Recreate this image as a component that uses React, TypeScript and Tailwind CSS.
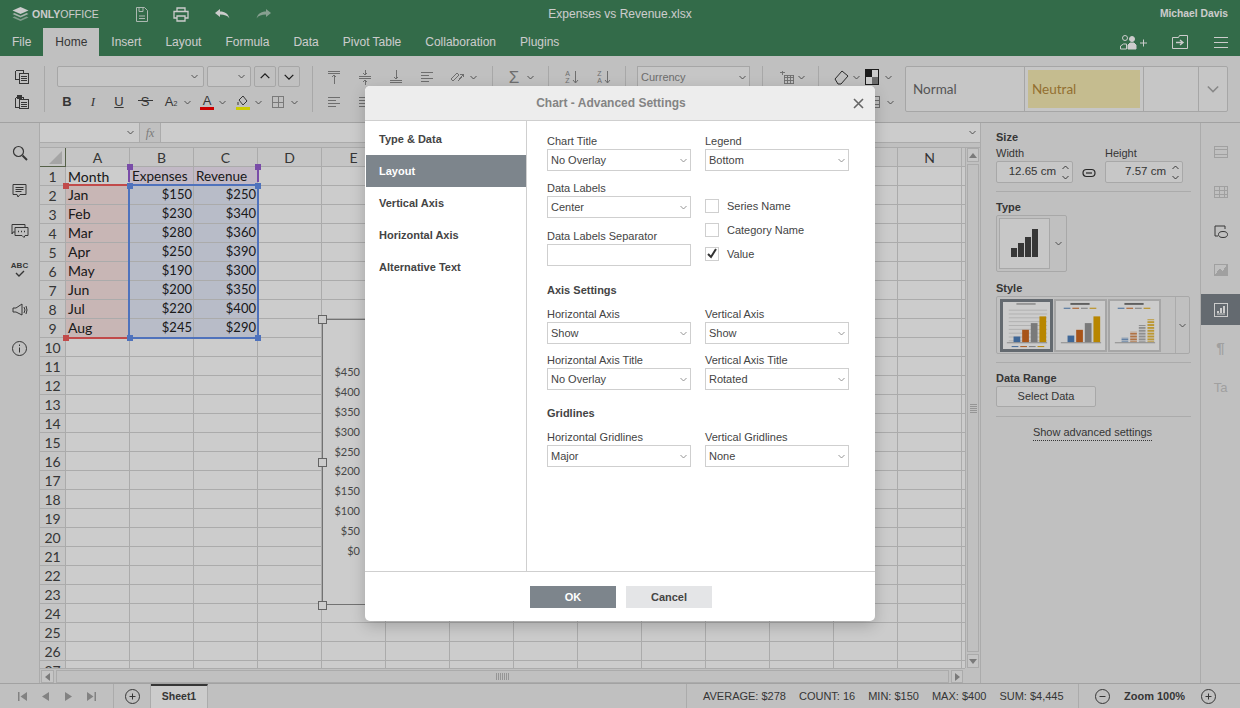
import type { ReactNode } from "react";

const LINE = "border-[#d6d6d6]";
const colNames = "ABCDEFGHIJKLMN".split("");
const months = ["Jan", "Feb", "Mar", "Apr", "May", "Jun", "Jul", "Aug"];
const expenses = ["$150", "$230", "$280", "$250", "$190", "$200", "$220", "$245"];
const revenue = ["$250", "$340", "$360", "$390", "$300", "$350", "$400", "$290"];
const axisLabels = ["$450", "$400", "$350", "$300", "$250", "$200", "$150", "$100", "$50", "$0"];
const tabs = ["Insert", "Layout", "Formula", "Data", "Pivot Table", "Collaboration", "Plugins"];

const Svg = ({ s = 16, c = "#444", children }: { s?: number; c?: string; children: ReactNode }) => (
  <svg width={s} height={s} viewBox="0 0 16 16" fill="none" stroke={c} strokeWidth="1" shapeRendering="crispEdges">
    {children}
  </svg>
);

const Chev = ({ c = "#555", s = 7 }: { c?: string; s?: number }) => (
  <svg width={s} height={s} viewBox="0 0 7 7" fill="none" stroke={c} strokeWidth="0.9" className="shrink-0">
    <path d="M0.5 2 L3.5 5 L6.5 2" />
  </svg>
);

const Sep = () => <div className="h-[46px] w-px bg-[#d2d2d2]" />;

const Tool = ({ w, children }: { w: string; children: ReactNode }) => (
  <div className={`flex h-[22px] shrink-0 items-center justify-center ${w}`}>{children}</div>
);

const CopyIcon = () => (
  <Svg>
    <path d="M1.5 1.5h8v3M1.5 1.5v9h3" />
    <path d="M5.5 4.5h9v10h-9z" />
    <path d="M7 7.5h6M7 9.5h6M7 11.5h6" />
  </Svg>
);

const PasteIcon = () => (
  <Svg>
    <path d="M1.5 3.5h8v2M1.5 3.5v10h3" />
    <path d="M3.5 1.5h4v3h-4z" fill="#444" />
    <path d="M5.5 5.5h9v9h-9z" />
    <path d="M7 8.5h6M7 10.5h6M7 12.5h6" />
  </Svg>
);

const AlignV = ({ kind }: { kind: "top" | "mid" | "bot" }) => (
  <Svg c="#8a8a8a">
    {kind === "top" && <path d="M2 2.5h12M2 4.5h12M8 6v9M6 8l2-2 2 2" />}
    {kind === "mid" && <path d="M2 7.5h12M2 9.5h12M8 1v5M6 4l2 2 2-2M8 11v5M6 13l2-2 2 2" />}
    {kind === "bot" && <path d="M2 11.5h12M2 13.5h12M8 1v9M6 8l2 2 2-2" />}
  </Svg>
);

const Lines = ({ c = "#8a8a8a" }: { c?: string }) => (
  <Svg c={c}>
    <path d="M2 3.5h12M2 6.5h8M2 9.5h12M2 12.5h8" />
  </Svg>
);

const Sort = ({ a, b }: { a: string; b: string }) => (
  <div className="flex items-center gap-[2px] text-[#8a8a8a]">
    <div className="flex flex-col text-[7px] leading-[7px]">
      <span>{a}</span>
      <span>{b}</span>
    </div>
    <svg width="7" height="14" viewBox="0 0 7 14" fill="none" stroke="#8a8a8a">
      <path d="M3.5 1v12M1 10l2.5 3 2.5-3" />
    </svg>
  </div>
);

const Toolbar = () => (
  <div className="flex h-[67px] shrink-0 items-start border-b border-[#cbcbcb] bg-[#f1f1f1] pt-[10px]">
    <div className="flex w-[44px] shrink-0 flex-col items-center gap-[3px]">
      <Tool w="w-[22px]"><CopyIcon /></Tool>
      <Tool w="w-[22px]"><PasteIcon /></Tool>
    </div>
    <Sep />
    <div className="ml-[12px] flex w-[243px] shrink-0 flex-col gap-[3px]">
      <div className="flex h-[22px]">
        <div className="flex h-[21px] w-[147px] items-center justify-end rounded-[2px] border border-[#d0d0d0] bg-[#f8f8f8] pr-[5px]"><Chev /></div>
        <div className="ml-[3px] flex h-[21px] w-[44px] items-center justify-end rounded-[2px] border border-[#d0d0d0] bg-[#f8f8f8] pr-[5px]"><Chev /></div>
        <div className="ml-[3px] flex h-[21px] w-[22px] rotate-180 items-center justify-center rounded-[2px] border border-[#d0d0d0]"><Chev c="#222" s={10} /></div>
        <div className="ml-[2px] flex h-[21px] w-[22px] items-center justify-center rounded-[2px] border border-[#d0d0d0]"><Chev c="#222" s={10} /></div>
      </div>
      <div className="-ml-[3px] flex h-[22px] items-center text-[13px] text-[#444]">
        <Tool w="w-[26px]"><b>B</b></Tool>
        <Tool w="w-[26px]"><i className="font-['Liberation_Serif',serif]">I</i></Tool>
        <Tool w="w-[26px]"><u>U</u></Tool>
        <Tool w="w-[26px]">
          <span className="relative">
            S
            <span className="absolute left-[-3px] top-[8px] h-px w-[15px] bg-[#444]" />
          </span>
        </Tool>
        <Tool w="w-[26px]"><span>A<span className="text-[7px]">2</span></span></Tool>
        <Tool w="w-[6px]"><Chev /></Tool>
        <Tool w="ml-[5px] w-[24px]">
          <span className="flex flex-col items-center leading-[13px]">A<span className="h-[3px] w-[14px] bg-[#ff0000]" /></span>
        </Tool>
        <Tool w="w-[6px]"><Chev /></Tool>
        <Tool w="ml-[6px] w-[24px]">
          <span className="flex flex-col items-center">
            <svg width="14" height="13" viewBox="0 0 14 13" fill="none" stroke="#444"><path d="M3 6l4-4 4 5-4 4zM2 8v3" /></svg>
            <span className="h-[3px] w-[14px] bg-[#ffff00]" />
          </span>
        </Tool>
        <Tool w="w-[6px]"><Chev /></Tool>
        <Tool w="ml-[5px] w-[24px]">
          <Svg c="#999"><path d="M2.500 2.500h11v11h-11zM8 2.500v11M2.500 8h11" /></Svg>
        </Tool>
        <Tool w="ml-px w-[6px]"><Chev /></Tool>
      </div>
    </div>
    <div className="ml-[12px]"><Sep /></div>
    <div className="flex w-[179px] shrink-0 flex-col gap-[3px] pl-[5px]">
      <div className="flex items-center">
        <Tool w="w-[31px]"><AlignV kind="top" /></Tool>
        <Tool w="w-[31px]"><AlignV kind="mid" /></Tool>
        <Tool w="w-[31px]"><AlignV kind="bot" /></Tool>
        <Tool w="w-[32px]"><Lines /></Tool>
        <Tool w="w-[28px]">
          <Svg c="#8a8a8a"><path d="M2 10l6-6 2 2-6 6zM9 12l5-6M11 5h3v3" /></Svg>
        </Tool>
        <Tool w="w-[4px]"><Chev /></Tool>
      </div>
      <div className="flex items-center">
        <Tool w="w-[31px]"><Lines /></Tool>
        <Tool w="w-[31px]"><Lines /></Tool>
      </div>
    </div>
    <Sep />
    <div className="flex w-[55px] shrink-0 items-center pl-[11px]">
      <Tool w="w-[20px]"><span className="text-[17px] leading-none text-[#8a8a8a]">Σ</span></Tool>
      <Tool w="w-[12px]"><Chev /></Tool>
    </div>
    <Sep />
    <div className="flex w-[76px] shrink-0 items-center pl-[7px]">
      <Tool w="w-[32px]"><Sort a="A" b="Z" /></Tool>
      <Tool w="w-[32px]"><Sort a="Z" b="A" /></Tool>
    </div>
    <Sep />
    <div className="ml-[11px] flex h-[21px] w-[113px] shrink-0 items-center justify-between border border-[#d0d0d0] bg-[#f8f8f8] pl-[3px] pr-[3px] pt-px text-[11px] text-[#888]">
      Currency <Chev />
    </div>
    <div className="ml-[12px]"><Sep /></div>
    <div className="flex w-[55px] shrink-0 items-center pl-[15px]">
      <Tool w="w-[18px]">
        <Svg s={15} c="#8a8a8a"><path d="M4.500 5.500h10v9h-10zM4.500 8.500h10M4.500 11.500h10M8 5.500v9M11 5.500v9M0 3h5M2.500 1v4" /></Svg>
      </Tool>
      <Tool w="w-[11px]"><Chev /></Tool>
    </div>
    <Sep />
    <div className="flex w-[86px] shrink-0 flex-col gap-[3px] pl-[12px]">
      <div className="flex items-center">
        <Tool w="w-[20px]">
          <svg width="17" height="17" viewBox="0 0 17 17" fill="none" stroke="#333"><path d="M2 10l7-8 6 5-7 8H5z" /></svg>
        </Tool>
        <Tool w="w-[11px]"><Chev /></Tool>
        <Tool w="ml-px w-[17px]">
          <span className="grid h-[16px] w-[14px] grid-cols-2 grid-rows-2 border border-[#222]">
            <span className="bg-[#222]" /><span className="bg-white" /><span className="bg-white" /><span className="bg-[#888]" />
          </span>
        </Tool>
        <Tool w="ml-px w-[14px]"><Chev /></Tool>
      </div>
      <div className="flex items-center pl-[35px]">
        <Tool w="w-[17px]"><Svg c="#8a8a8a"><path d="M3.500 2.500h9v11h-9zM3.500 6h9M3.500 10h9" /></Svg></Tool>
        <Tool w="w-[14px]"><Chev /></Tool>
      </div>
    </div>
    <div className="flex h-[46px] w-[323px] shrink-0 rounded-[2px] border border-[#d0d0d0] bg-[#f8f8f8]">
      <div className="flex w-[119px] items-center border-r border-[#d0d0d0] pl-[7px] font-['Lato',sans-serif] text-[13.5px] text-[#6b6b6b]">Normal</div>
      <div className="flex w-[119px] items-center border-r border-[#d0d0d0] px-[3px]">
        <div className="flex h-[38px] w-[112px] items-center bg-[#f7ebb3] pl-[4px] font-['Lato',sans-serif] text-[13.5px] text-[#b88c3c]">Neutral</div>
      </div>
      <div className="w-[55px] border-r border-[#d0d0d0]" />
      <div className="flex flex-1 items-center justify-center"><Chev c="#aaa" s={12} /></div>
    </div>
  </div>
);

const Select = ({ value }: { value: string }) => (
  <div className="flex h-[22px] w-[144px] items-center justify-between border border-[#cfcfcf] bg-white pl-[3px] pr-[3px] text-[11px] text-[#444]">
    {value}
    <Chev c="#888" />
  </div>
);

const Field = ({ label, value }: { label: string; value: string }) => (
  <div className="flex w-[144px] flex-col">
    <div className="h-[15px] text-[11px] leading-[15px] text-[#444]">{label}</div>
    <Select value={value} />
  </div>
);

const Check = ({ label, on }: { label: string; on?: boolean }) => (
  <div className="flex h-[14px] items-center text-[11px] text-[#444]">
    <div className="flex h-[14px] w-[14px] items-center justify-center border border-[#cfcfcf] bg-white">
      {on && (
        <svg width="12" height="12" viewBox="0 0 12 12" fill="none" stroke="#333" strokeWidth="2">
          <path d="M2 6l3 3 5-8" />
        </svg>
      )}
    </div>
    <span className="ml-[8px]">{label}</span>
  </div>
);

const Dialog = () => (
  <div className="absolute left-[365px] top-[86px] flex h-[535px] w-[510px] flex-col overflow-hidden rounded-[5px] bg-white shadow-[0_5px_15px_rgba(0,0,0,0.2)]">
    <div className="relative flex h-[35px] shrink-0 items-center justify-center border-b border-[#cfcfcf] bg-[#ededed] pr-[18px] text-[12px] font-bold text-[#848484]">
      Chart - Advanced Settings
      <svg className="absolute left-[488px] top-[12px]" width="11" height="11" viewBox="0 0 11 11" fill="none" stroke="#666" strokeWidth="1.6">
        <path d="M1 1l9 9M10 1l-9 9" />
      </svg>
    </div>
    <div className="flex h-[450px] shrink-0">
      <div className="flex w-[162px] shrink-0 flex-col border-r border-[#cfcfcf] pl-px pt-[2px] text-[11px] font-bold text-[#444]">
        <div className="flex h-[32px] items-center pl-[13px]">Type &amp; Data</div>
        <div className="flex h-[32px] items-center bg-[#7d858c] pl-[13px] text-white">Layout</div>
        <div className="flex h-[32px] items-center pl-[13px]">Vertical Axis</div>
        <div className="flex h-[32px] items-center pl-[13px]">Horizontal Axis</div>
        <div className="flex h-[32px] items-center pl-[13px]">Alternative Text</div>
      </div>
      <div className="flex flex-1 flex-col pl-[20px] pt-[13px]">
        <div className="flex gap-[14px]">
          <Field label="Chart Title" value="No Overlay" />
          <Field label="Legend" value="Bottom" />
        </div>
        <div className="mt-[10px] flex gap-[14px]">
          <div className="flex w-[144px] flex-col">
            <Field label="Data Labels" value="Center" />
            <div className="mt-[11px] h-[15px] text-[11px] leading-[15px] text-[#444]">Data Labels Separator</div>
            <div className="h-[22px] border border-[#cfcfcf] bg-white" />
          </div>
          <div className="flex flex-col gap-[10px] pt-[18px]">
            <Check label="Series Name" />
            <Check label="Category Name" />
            <Check label="Value" on />
          </div>
        </div>
        <div className="mt-[17px] h-[15px] text-[11px] font-bold leading-[15px] text-[#444]">Axis Settings</div>
        <div className="mt-[9px] flex gap-[14px]">
          <Field label="Horizontal Axis" value="Show" />
          <Field label="Vertical Axis" value="Show" />
        </div>
        <div className="mt-[9px] flex gap-[14px]">
          <Field label="Horizontal Axis Title" value="No Overlay" />
          <Field label="Vertical Axis Title" value="Rotated" />
        </div>
        <div className="mt-[16px] h-[15px] text-[11px] font-bold leading-[15px] text-[#444]">Gridlines</div>
        <div className="mt-[9px] flex gap-[14px]">
          <Field label="Horizontal Gridlines" value="Major" />
          <Field label="Vertical Gridlines" value="None" />
        </div>
      </div>
    </div>
    <div className="flex flex-1 gap-[10px] border-t border-[#cfcfcf] pl-[165px] pt-[14px] text-[11px] font-bold">
      <div className="flex h-[22px] w-[86px] items-center justify-center bg-[#7d858c] text-white">OK</div>
      <div className="flex h-[22px] w-[86px] items-center justify-center bg-[#e4e5e7] text-[#444]">Cancel</div>
    </div>
  </div>
);

const Handle = ({ cls }: { cls: string }) => <div className={`absolute h-[6px] w-[6px] ${cls}`} />;

const ChartHandle = ({ cls }: { cls: string }) => (
  <div className={`absolute h-[9px] w-[9px] border border-[#7c7c7c] bg-white ${cls}`} />
);

const Grid = () => (
  <div className="relative h-[520px] w-[925px] overflow-hidden bg-white font-['Lato',sans-serif] text-[14px] text-[#222]">
    <div className="flex h-[19px]">
      <div className="relative h-[19px] w-[26px] shrink-0 border-b border-r border-[#6b7a5a] bg-[#f7f7f7]">
        <div className="absolute bottom-[2px] right-[3px] h-0 w-0 border-b-[13px] border-l-[13px] border-b-[#cfcfcf] border-l-transparent" />
      </div>
      {colNames.map((c) => (
        <div key={c} className={`flex h-[19px] w-[64px] shrink-0 items-center justify-center border-b border-r bg-[#f7f7f7] text-[#444] ${LINE}`}>{c}</div>
      ))}
      <div className={`flex-1 border-b bg-[#f7f7f7] ${LINE}`} />
    </div>
    {Array.from({ length: 27 }, (_, r) => {
      const i = r - 1;
      return (
        <div key={r} className="flex h-[19px]">
          <div className={`flex h-[19px] w-[26px] shrink-0 items-center justify-center border-b border-r bg-[#f7f7f7] text-[#444] ${LINE}`}>{r + 1}</div>
          {colNames.map((c) => {
            let text = "";
            let tone = "";
            let align = "pb-[2px] pl-[2px]";
            if (r === 0 && c === "A") { text = "Month"; align = "pl-[2px]"; }
            if (r === 0 && c === "B") { text = "Expenses"; tone = "bg-[#f3e8f8] text-[13.5px]"; align = "pl-[2px]"; }
            if (r === 0 && c === "C") { text = "Revenue"; tone = "bg-[#f3e8f8] text-[13.5px]"; align = "pl-[2px]"; }
            if (r >= 1 && r <= 8) {
              if (c === "A") { text = months[i]; tone = "bg-[#fbe4e3]"; }
              if (c === "B") { text = expenses[i]; tone = "bg-[#e6ebfb] text-[13px]"; align = "justify-end pr-[1px]"; }
              if (c === "C") { text = revenue[i]; tone = "bg-[#e6ebfb] text-[13px]"; align = "justify-end pr-[1px]"; }
            }
            return (
              <div key={c} className={`flex h-[19px] w-[64px] shrink-0 items-center overflow-hidden whitespace-nowrap border-b border-r ${LINE} ${tone} ${align}`}>{text}</div>
            );
          })}
          <div className={`flex-1 border-b ${LINE}`} />
        </div>
      );
    })}

    <div className="absolute left-[26px] top-[36px] h-[2px] w-[63px] bg-[#f25d5d]" />
    <div className="absolute left-[26px] top-[189px] h-[2px] w-[63px] bg-[#f25d5d]" />
    <div className="absolute left-[88px] top-[36px] h-[155px] w-[131px] border-2 border-[#638fec]" />
    <div className="absolute left-[88px] top-[22px] h-[12px] w-[2px] bg-[#9860d2]" />
    <div className="absolute left-[217px] top-[22px] h-[12px] w-[2px] bg-[#9860d2]" />
    <Handle cls="left-[23px] top-[35px] bg-[#f25d5d]" />
    <Handle cls="left-[23px] top-[187px] bg-[#f25d5d]" />
    <Handle cls="left-[87px] top-[16px] bg-[#9860d2]" />
    <Handle cls="left-[215px] top-[16px] bg-[#9860d2]" />
    <Handle cls="left-[87px] top-[35px] bg-[#638fec]" />
    <Handle cls="left-[215px] top-[35px] bg-[#638fec]" />
    <Handle cls="left-[87px] top-[187px] bg-[#638fec]" />
    <Handle cls="left-[215px] top-[187px] bg-[#638fec]" />

    <div className="absolute left-[282px] top-[171px] h-[286px] w-[478px] border border-[#8f8f8f] bg-white pr-[439px] pt-[42px] text-right text-[11px] text-[#595959]">
      {axisLabels.map((l) => (
        <div key={l} className="h-[19.9px] leading-[19.9px]">{l}</div>
      ))}
    </div>
    <ChartHandle cls="left-[278px] top-[167px]" />
    <ChartHandle cls="left-[278px] top-[310px]" />
    <ChartHandle cls="left-[278px] top-[453px]" />
  </div>
);

const ScrollV = () => (
  <div className={`flex h-[520px] w-[15px] shrink-0 flex-col gap-[2px] border-l bg-[#f1f1f1] pl-px pr-px ${LINE}`}>
    <div className={`flex h-[14px] shrink-0 items-center justify-center border bg-[#f7f7f7] ${LINE}`}>
      <div className="h-0 w-0 border-x-[4px] border-b-[5px] border-x-transparent border-b-[#999]" />
    </div>
    <div className={`flex flex-1 items-center justify-center border bg-[#f1f1f1] ${LINE}`}>
      <div className="h-[10px] w-[7px] bg-[repeating-linear-gradient(0deg,#bbb_0,#bbb_1px,transparent_1px,transparent_2px)]" />
    </div>
    <div className={`flex h-[14px] shrink-0 items-center justify-center border bg-[#f7f7f7] ${LINE}`}>
      <div className="h-0 w-0 border-x-[4px] border-t-[5px] border-x-transparent border-t-[#999]" />
    </div>
  </div>
);

const ScrollH = () => (
  <div className={`flex h-[15px] w-[925px] shrink-0 gap-[2px] border-t pt-px ${LINE}`}>
    <div className={`ml-px flex h-[13px] w-[13px] shrink-0 items-center justify-center border bg-[#f7f7f7] ${LINE}`}>
      <div className="h-0 w-0 border-y-[4px] border-r-[5px] border-y-transparent border-r-[#999]" />
    </div>
    <div className={`flex h-[13px] flex-1 items-center justify-center border ${LINE}`}>
      <div className="h-[7px] w-[14px] bg-[repeating-linear-gradient(90deg,#bbb_0,#bbb_1px,transparent_1px,transparent_2px)]" />
    </div>
    <div className={`mr-[2px] flex h-[13px] w-[12px] shrink-0 items-center justify-center border bg-[#f7f7f7] ${LINE}`}>
      <div className="h-0 w-0 border-y-[4px] border-l-[5px] border-y-transparent border-l-[#999]" />
    </div>
  </div>
);

const barColors = ["#4f81bd", "#d2691e", "#999", "#e6a800"];

const Thumb = ({ bars, selected, striped, legendTop }: { bars: number[]; selected?: boolean; striped?: boolean; legendTop?: boolean }) => (
  <div className={`flex h-[53px] w-[53px] shrink-0 items-center justify-center bg-white ${selected ? "border-[3px] border-[#7d858c]" : "border-[2px] border-[#d0d0d0]"}`}>
    <svg width="47" height="47" viewBox="0 0 49 49" className="shrink-0">
      <rect x="14" y="1" width="20" height="2" fill={selected ? "#bbb" : "#777"} />
      {legendTop && barColors.map((f, i) => <rect key={f} x={7 + i * 9} y="6" width="7" height="1" fill={f} />)}
      {!legendTop && [8, 12, 16, 20, 24, 28, 32, 36, 40].map((y) => <rect key={y} x="6" y={y} width="40" height="1" fill="#ddd" />)}
      {bars.map((h, i) => (
        <rect key={i} x={11 + i * 9} y={42 - h} width="7" height={h} fill={barColors[i]} opacity={striped ? 0.75 : 1} />
      ))}
      {striped && [16, 19, 22, 25, 28, 31, 34, 37, 40].map((y) => <rect key={y} x="10" y={y} width="36" height="1" fill="#fff" />)}
      <rect x="4" y="42" width="42" height="1" fill="#aaa" />
      {!legendTop && barColors.map((f, i) => <rect key={f} x={9 + i * 9} y="46" width="7" height="1" fill={f} />)}
    </svg>
  </div>
);

const RightPanel = () => (
  <div className={`flex w-[221px] shrink-0 flex-col border-l border-r bg-[#f1f1f1] pl-[15px] pr-[9px] text-[11px] text-[#444] ${LINE}`}>
    <div className="mt-[7px] h-[14px] font-bold leading-[14px]">Size</div>
    <div className="mt-[2px] flex">
      <div>
        <div className="h-[15px] leading-[15px]">Width</div>
        <div className="flex h-[22px] w-[77px] items-center justify-end rounded-[2px] border border-[#d3d3d3] bg-[#f9f9f9] pr-[3px] text-[12px]">
          <span className="text-[11.5px]">12.65 cm</span>
          <div className="ml-[6px] flex flex-col gap-[3px]"><span className="rotate-180"><Chev c="#333" /></span><Chev c="#333" /></div>
        </div>
      </div>
      <div className="flex w-[32px] items-end justify-center pb-[5px]">
        <svg width="14" height="10" viewBox="0 0 14 10" fill="none" stroke="#333" strokeWidth="1.2"><rect x="1" y="1.500" width="12" height="7" rx="3.500" /><path d="M4 5h6" /></svg>
      </div>
      <div>
        <div className="h-[15px] leading-[15px]">Height</div>
        <div className="flex h-[22px] w-[78px] items-center justify-end rounded-[2px] border border-[#d3d3d3] bg-[#f9f9f9] pr-[3px]">
          <span className="text-[11.5px]">7.57 cm</span>
          <div className="ml-[6px] flex flex-col gap-[3px]"><span className="rotate-180"><Chev c="#333" /></span><Chev c="#333" /></div>
        </div>
      </div>
    </div>
    <div className={`mt-[8px] border-t ${LINE}`} />
    <div className="mt-[8px] h-[14px] font-bold leading-[14px]">Type</div>
    <div className="mt-[1px] flex h-[57px] w-[71px] items-center rounded-[2px] border border-[#d3d3d3] pl-[2px]">
      <div className="flex h-[51px] w-[51px] items-end justify-center gap-[1px] border border-[#d3d3d3] bg-[#f9f9f9] pb-[11px]">
        <span className="h-[9px] w-[6px] bg-[#444]" />
        <span className="h-[14px] w-[6px] bg-[#444]" />
        <span className="h-[20px] w-[6px] bg-[#444]" />
        <span className="h-[28px] w-[6px] bg-[#444]" />
      </div>
      <div className="ml-[5px]"><Chev /></div>
    </div>
    <div className="mt-[9px] h-[14px] font-bold leading-[14px]">Style</div>
    <div className="mt-[1px] flex h-[58px] w-[194px] items-center gap-px rounded-[2px] border border-[#d3d3d3] pl-[3px]">
      <Thumb bars={[6, 13, 20, 27]} selected />
      <Thumb bars={[7, 13, 20, 27]} legendTop />
      <Thumb bars={[5, 11, 18, 24]} legendTop striped />
      <div className={`ml-[13px] flex h-[56px] flex-1 items-center justify-center border-l ${LINE}`}><Chev /></div>
    </div>
    <div className={`mt-[8px] border-t ${LINE}`} />
    <div className="mt-[8px] h-[14px] font-bold leading-[14px]">Data Range</div>
    <div className="mt-[1px] flex h-[21px] w-[100px] items-center justify-center rounded-[2px] border border-[#d3d3d3] bg-[#f9f9f9]">Select Data</div>
    <div className={`mt-[9px] border-t ${LINE}`} />
    <div className="mt-[8px] flex justify-center pr-[2px]">
      <span className="border-b border-dotted border-[#444] pb-[1px] leading-[14px]">Show advanced settings</span>
    </div>
  </div>
);

const RightTabs = () => (
  <div className="flex w-[39px] shrink-0 flex-col items-center bg-[#f1f1f1] pt-[21px]">
    <div className="flex h-[16px] items-center"><Svg c="#c8c8c8"><path d="M1.500 2.500h13v11h-13zM1.500 5.500h13M1.500 10.500h13" /></Svg></div>
    <div className="mt-[24px] flex h-[16px] items-center"><Svg c="#c8c8c8"><path d="M1.500 2.500h13v11h-13zM1.500 6h13M1.500 10h13M6 2.500v11M11 2.500v11" /></Svg></div>
    <div className="mt-[24px] flex h-[16px] items-center">
      <svg width="16" height="16" viewBox="0 0 16 16" fill="none" stroke="#444"><path d="M5 12H2V2h10v3" /><ellipse cx="10" cy="10.500" rx="4.500" ry="3" /></svg>
    </div>
    <div className="mt-[22px] flex h-[16px] items-center"><Svg c="#c8c8c8"><path d="M1.500 2.500h13v11h-13z" /><path d="M3 12l4-5 3 3 3-5v7z" fill="#c8c8c8" /></Svg></div>
    <div className="mt-[16px] flex h-[31px] w-[39px] items-center justify-center bg-[#7d858c]">
      <svg width="14" height="14" viewBox="0 0 14 14" fill="none" stroke="#fff"><rect x="0.500" y="0.500" width="13" height="13" /><path d="M3 11h8" /><path d="M4 10V8M7 10V5M10 10V3" strokeWidth="2" /></svg>
    </div>
    <div className="mt-[15px] flex h-[16px] items-center text-[15px] font-bold text-[#c8c8c8]">¶</div>
    <div className="mt-[24px] flex h-[16px] items-center text-[13px] text-[#c8c8c8]">Ta</div>
  </div>
);

const LeftBar = () => (
  <div className={`flex w-[40px] shrink-0 flex-col items-center border-r bg-[#f1f1f1] pt-[22px] ${LINE}`}>
    <svg width="16" height="16" viewBox="0 0 16 16" fill="none" stroke="#444" strokeWidth="1.2"><circle cx="6.500" cy="6.500" r="5" /><path d="M10.500 10.500l4.500 4.500" strokeWidth="2" /></svg>
    <svg className="mt-[22px]" width="15" height="16" viewBox="0 0 15 16" fill="none" stroke="#444"><path d="M1 1.500h13v10H8l-2 2.500-1-2.500H1zM3.500 4.500h8M3.500 6.500h8M3.500 8.500h6" /></svg>
    <svg className="mt-[24px]" width="19" height="16" viewBox="0 0 19 16" fill="none" stroke="#444"><path d="M5 9H3l-1 2V1.500h13V4" /><path d="M5 4.500h13v8h-3l-1 2-2-2H5z" /><path d="M8 8.500h1M11 8.500h1M14 8.500h1" strokeWidth="1.400" /></svg>
    <div className="mt-[22px] flex h-[18px] flex-col items-center text-[8px] font-bold leading-[9px] text-[#444]">
      ABC
      <svg width="10" height="7" viewBox="0 0 10 7" fill="none" stroke="#444" strokeWidth="1.400"><path d="M1 3l3 3 5-5" /></svg>
    </div>
    <svg className="mt-[24px]" width="16" height="14" viewBox="0 0 16 14" fill="none" stroke="#444"><path d="M1 5h3l6-4v11L4 9H1zM12 4q2 3 0 6M14 3q2 4 0 8" /></svg>
    <svg className="mt-[24px]" width="15" height="15" viewBox="0 0 15 15" fill="none" stroke="#444"><circle cx="7.500" cy="7.500" r="7" /><path d="M7.500 6.500v5M7.500 3.500v1.500" /></svg>
  </div>
);

const StatusBar = () => (
  <div className="flex h-[25px] shrink-0 items-center border-t border-[#cbcbcb] bg-[#f1f1f1] text-[11px] text-[#444]">
    <div className={`flex h-full w-[114px] shrink-0 items-center gap-[14px] border-r pl-[18px] ${LINE}`}>
      <svg width="9" height="9" viewBox="0 0 9 9" fill="#a3a3a3"><path d="M0 0h1.500v9H0zM9 0v9L2.500 4.500z" /></svg>
      <svg width="9" height="9" viewBox="0 0 9 9" fill="#a3a3a3"><path d="M8 0v9L1 4.500z" /></svg>
      <svg width="9" height="9" viewBox="0 0 9 9" fill="#a3a3a3"><path d="M1 0v9l7-4.500z" /></svg>
      <svg width="9" height="9" viewBox="0 0 9 9" fill="#a3a3a3"><path d="M7.500 0H9v9H7.500zM0 0v9l6.500-4.500z" /></svg>
    </div>
    <div className={`flex h-full w-[37px] shrink-0 items-center justify-center border-r ${LINE}`}>
      <svg width="15" height="15" viewBox="0 0 15 15" fill="none" stroke="#444"><circle cx="7.500" cy="7.500" r="7" /><path d="M7.500 4.500v6M4.500 7.500h6" /></svg>
    </div>
    <div className={`flex h-full w-[57px] shrink-0 items-center justify-center border-r border-t-2 border-t-[#444] bg-white text-[10.5px] font-bold ${LINE}`}>Sheet1</div>
    <div className={`flex h-full w-[479px] shrink-0 border-r ${LINE}`} />
    <div className={`flex h-full w-[392px] shrink-0 items-center gap-[13px] border-r pl-[16px] ${LINE}`}>
      <span>AVERAGE: $278</span>
      <span>COUNT: 16</span>
      <span>MIN: $150</span>
      <span>MAX: $400</span>
      <span>SUM: $4,445</span>
    </div>
    <div className="flex flex-1 items-center pl-[16px]">
      <svg width="15" height="15" viewBox="0 0 15 15" fill="none" stroke="#444"><circle cx="7.500" cy="7.500" r="7" /><path d="M4.500 7.500h6" /></svg>
      <span className="ml-[14px] w-[62px] whitespace-nowrap font-bold">Zoom 100%</span>
      <svg className="ml-[15px]" width="15" height="15" viewBox="0 0 15 15" fill="none" stroke="#444"><circle cx="7.500" cy="7.500" r="7" /><path d="M7.500 4.500v6M4.500 7.500h6" /></svg>
    </div>
  </div>
);

const TitleBar = () => (
  <div className="relative flex h-[28px] shrink-0 items-center bg-[#40865c] pl-[12px] text-white">
    <svg width="17" height="15" viewBox="0 0 17 15" fill="#fff">
      <path d="M8.500 0l8 3.500-8 3.500-8-3.500z" />
      <path d="M2.500 6l6 2.700 6-2.700 2 1-8 3.500-8-3.500z" opacity="0.75" />
      <path d="M2.500 9.500l6 2.700 6-2.700 2 1-8 3.500-8-3.500z" opacity="0.5" />
    </svg>
    <span className="ml-[3px] w-[66px] whitespace-nowrap text-[10.5px] leading-none">
      <b>ONLY</b>OFFICE
    </span>
    <div className="ml-[37px] flex items-center">
      <svg width="14" height="15" viewBox="0 0 14 15" fill="none" stroke="#fff" opacity="0.8"><path d="M1.500 0.500h8l3 3v11h-11zM4 0.500v4h4v-4M4 9h6M4 11.500h6" /></svg>
      <svg className="ml-[24px]" width="16" height="15" viewBox="0 0 16 15" fill="none" stroke="#fff" strokeWidth="1.300"><path d="M4 4V1h8v3M4 11H1V4.500h14V11h-3M4 9h8v5H4z" /></svg>
      <svg className="ml-[26px]" width="15" height="10" viewBox="0 0 15 10" fill="#fff"><path d="M0 4l5-4v2.500c5 0 8 2 9.500 7-2-3-5-4-9.500-4V8z" /></svg>
      <svg className="ml-[26px] -scale-x-100" width="15" height="10" viewBox="0 0 15 10" fill="#fff" opacity="0.55"><path d="M0 4l5-4v2.500c5 0 8 2 9.500 7-2-3-5-4-9.500-4V8z" /></svg>
    </div>
    <div className="absolute left-0 right-0 top-0 flex h-[28px] items-center justify-center text-[12px]">Expenses vs Revenue.xlsx</div>
    <div className="absolute right-[12px] top-0 flex h-[28px] items-center text-[10.3px] font-bold">Michael Davis</div>
  </div>
);

const TabBar = () => (
  <div className="flex h-[28px] shrink-0 items-stretch bg-[#40865c] text-[12px] text-white">
    <div className="flex items-center px-[12px]">File</div>
    <div className="flex items-center bg-[#f1f1f1] px-[12px] text-[#444]">Home</div>
    {tabs.map((t) => (
      <div key={t} className="flex items-center px-[12px]">{t}</div>
    ))}
    <div className="ml-auto flex items-center pr-[12px]">
      <svg width="28" height="16" viewBox="0 0 28 16" fill="none" stroke="#fff"><circle cx="5" cy="4" r="2.500" /><path d="M0.500 15v-3l3-2h3v5z" /><circle cx="12" cy="5" r="2.500" fill="#fff" /><path d="M8 15v-4l2-2h4l2 2v4z" fill="#fff" /><path d="M20 9h7M23.500 5.500v7" /></svg>
      <svg className="ml-[24px]" width="16" height="14" viewBox="0 0 16 14" fill="none" stroke="#fff"><path d="M0.500 2.500h6l1-2h8v13h-15z" /><path d="M4 7.500h6M8 5l3 2.500L8 10" strokeWidth="1.400" /></svg>
      <svg className="ml-[26px]" width="14" height="11" viewBox="0 0 14 11" stroke="#fff"><path d="M0 0.500h14M0 5.500h14M0 10.500h14" /></svg>
    </div>
  </div>
);

const App = () => {
  return (
    <div className="relative flex h-[708px] w-[1240px] flex-col overflow-hidden bg-[#f1f1f1] font-['Liberation_Sans',Arial,sans-serif]">
      <TitleBar />
      <TabBar />
      <Toolbar />
      <div className="flex h-[560px] shrink-0">
        <LeftBar />
        <div className="flex w-[940px] shrink-0 flex-col">
          <div className={`flex h-[20px] shrink-0 border-b ${LINE} bg-white`}>
            <div className={`flex w-[100px] items-center justify-end border-r pr-[5px] ${LINE}`}><Chev /></div>
            <div className={`flex w-[21px] items-center justify-center border-r bg-[#f1f1f1] font-['Liberation_Serif',serif] text-[12px] italic text-[#999] ${LINE}`}>fx</div>
            <div className="flex flex-1 items-center justify-end pr-[4px]"><Chev /></div>
          </div>
          <div className={`h-[5px] shrink-0 border-b ${LINE}`} />
          <div className="flex">
            <Grid />
            <ScrollV />
          </div>
          <ScrollH />
        </div>
        <RightPanel />
        <RightTabs />
      </div>
      <StatusBar />
      <div className="absolute inset-0 bg-black/20" />
      <Dialog />
    </div>
  );
};

export default App;
